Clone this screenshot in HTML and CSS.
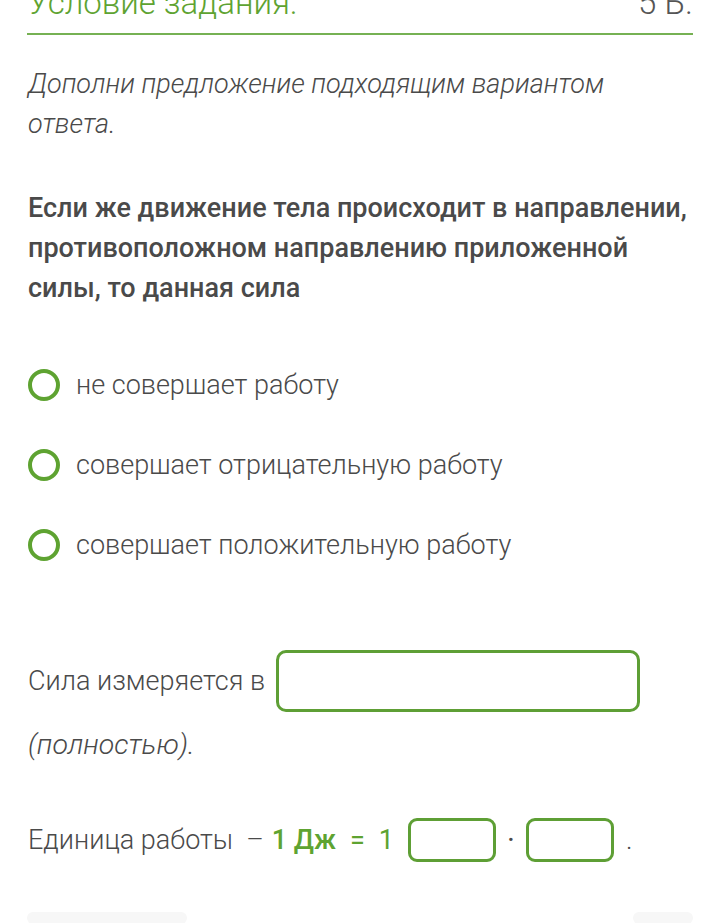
FILE: index.html
```html
<!DOCTYPE html>
<html lang="ru">
<head>
<meta charset="utf-8">
<link rel="stylesheet" href="styles.css">
</head>
<body>
<div class="page">
  <div class="header">
    <span class="title">Условие задания:</span>
    <span class="points">5 Б.</span>
  </div>
  <p class="instruction">Дополни предложение подходящим вариантом ответа.</p>
  <p class="question">Если же движение тела происходит в направлении, противоположном направлению приложенной силы, то данная сила</p>
  <div class="options">
    <div class="option"><span class="radio"></span><span>не совершает работу</span></div>
    <div class="option"><span class="radio"></span><span>совершает отрицательную работу</span></div>
    <div class="option"><span class="radio"></span><span>совершает положительную работу</span></div>
  </div>
  <div class="fill-row">
    <span>Сила измеряется в</span>
    <span class="input wide"></span>
  </div>
  <p class="note">(полностью).</p>
  <div class="unit-row">
    <span>Единица работы</span>
    <span class="dash">–</span>
    <span class="formula"><b>1 Дж</b><span class="eq">=</span>1</span>
    <span class="input small"></span>
    <span class="dot">·</span>
    <span class="input small"></span>
    <span class="period">.</span>
  </div>
  <div class="footer-bars">
    <span class="bar"></span>
    <span class="bar right"></span>
  </div>
</div>
</body>
</html>
```
FILE: styles.css
```css
html, body {
  margin: 0;
  padding: 0;
  background: #ffffff;
}
body {
  font-family: Roboto, "Noto Sans", sans-serif;
  color: #4a4a4a;
  overflow: hidden;
}
.page {
  width: 666px;
  margin-left: 27px;
}
.header {
  display: flex;
  justify-content: space-between;
  align-items: baseline;
  margin-top: -15px;
  padding-bottom: 12px;
  border-bottom: 2px solid #76b153;
  font-weight: 300;
  font-size: 33px;
  line-height: 36px;
}
.title {
  color: #5ea331;
  margin-left: 1px;
}
.points {
  color: #555;
}
.instruction {
  margin: 29px 0 0 1px;
  font-size: 27px;
  line-height: 40px;
  font-style: italic;
  font-weight: 300;
}
.question {
  margin: 44px 0 0 1px;
  font-size: 27px;
  line-height: 40px;
  font-weight: 500;
  color: #4a4a4a;
}
.options {
  margin-top: 57px;
  display: flex;
  flex-direction: column;
  gap: 40px;
}
.option {
  display: flex;
  align-items: center;
  gap: 16px;
  height: 40px;
  font-size: 27px;
  font-weight: 300;
}
.radio {
  width: 24px;
  height: 24px;
  border: 4px solid #5ea331;
  border-radius: 50%;
  flex: none;
  margin-left: 1px;
}
.fill-row {
  margin-top: 85px;
  display: flex;
  align-items: center;
  gap: 11px;
  font-size: 27px;
  font-weight: 300;
  padding-left: 1px;
}
.input {
  display: inline-block;
  box-sizing: border-box;
  border: 3px solid #5e9f35;
  border-radius: 10px;
  background: #fff;
  flex: none;
}
.input.wide {
  width: 364px;
  height: 62px;
}
.note {
  margin: 13px 0 0 1px;
  font-size: 28.5px;
  line-height: 40px;
  font-style: italic;
  font-weight: 300;
}
.unit-row {
  margin-top: 53px;
  display: flex;
  align-items: center;
  font-size: 27px;
  font-weight: 300;
  padding-left: 1px;
}
.dash {
  margin-left: 13px;
  color: #4a4a4a;
}
.formula {
  margin-left: 8px;
  color: #5ea331;
  font-weight: 400;
  margin-right: 14px;
}
.formula b {
  font-weight: 500;
}
.eq {
  margin: 0 14px;
}
.input.small {
  width: 88px;
  height: 44px;
  border-radius: 9px;
}
.dot {
  width: 30px;
  text-align: center;
  font-size: 30px;
  font-weight: 400;
  line-height: 1;
}
.period {
  margin-left: 12px;
}
.footer-bars {
  margin-top: 50px;
  display: flex;
  justify-content: space-between;
}
.bar {
  width: 160px;
  height: 12px;
  background: #f7f7f7;
  border-radius: 6px;
}
.bar.right {
  width: 60px;
}
```
